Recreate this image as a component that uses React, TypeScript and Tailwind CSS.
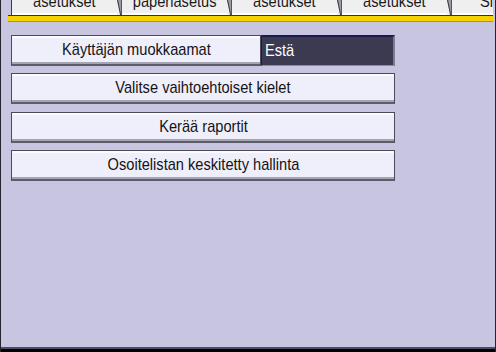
import React from "react"

const font = { fontFamily: '"Liberation Sans", Arial, sans-serif' }

function Wedge() {
  return (
    <svg width="5" height="15" viewBox="0 0 5 15" className="shrink-0 block">
      <polygon points="0,0 4,0 4,15 3.5,15" fill="#9a9aa0" />
      <line x1="0.5" y1="0" x2="3.6" y2="15" stroke="#3a3a44" strokeWidth="1" />
      <line x1="4.5" y1="0" x2="4.5" y2="15" stroke="#55555f" strokeWidth="1" />
    </svg>
  )
}

function Tab({ label, width = "w-[105px]", align = "justify-center" }: { label: string; width?: string; align?: string }) {
  return (
    <div className={`${width} shrink-0 h-[15px] flex ${align} overflow-hidden border-b-2 border-white`}>
      <span className="inline-block scale-x-[0.86] origin-center leading-none text-[17px] text-[#1a1a1a] whitespace-nowrap -mt-[7px]">
        {label}
      </span>
    </div>
  )
}

function Button({ label }: { label: string }) {
  return (
    <div className="h-[31px] flex items-center justify-center bg-[#efeefb] border border-[#4a4a5a] border-b-2 border-b-[#5c5c6c] shadow-[inset_0_2px_0_#fafaff,inset_0_-2px_0_#a4a4b2] text-[17px] leading-none text-[#141414]">
      <span className="inline-block scale-x-[0.86] whitespace-nowrap pb-[1px]">{label}</span>
    </div>
  )
}

export default function App() {
  const tabs = ["asetukset", "paperiasetus", "asetukset", "asetukset"]

  return (
    <div style={font} className="w-[496px] h-[352px] bg-[#c7c5e0] flex flex-col border-l border-r border-[#24242e] overflow-hidden">
      {/* Tab strip */}
      <div className="pl-[7px] pr-[2px]">
        <div className="ml-[3px] flex h-[15px] border-l border-[#3a3a44] bg-[#efeff0] overflow-hidden">
          {tabs.map((t, i) => (
            <React.Fragment key={i}>
              <Tab label={t} />
              <Wedge />
            </React.Fragment>
          ))}
          <Tab label="Si" width="flex-1" align="justify-start pl-[27px]" />
        </div>
        <div className="h-[1px] bg-[#33333c]" />
        <div className="h-[6px] bg-[#f6d300] border-b border-[#b59800]" />
      </div>

      {/* Menu */}
      <div className="mt-[13px] ml-[10px] w-[384px] flex flex-col gap-[7.3px]">
        <div className="flex h-[31px]">
          <div className="w-[250px]">
            <Button label="Käyttäjän muokkaamat" />
          </div>
          <div className="flex-1 h-[31px] flex items-center bg-[#3b3a50] border-t-2 border-l border-[#1b1b4e] border-r-2 border-r-[#7c7c92] border-b border-b-[#8a8a9e] text-white text-[17px] leading-none pl-[3px]">
            <span className="inline-block scale-x-[0.86] origin-left pb-[1px]">Estä</span>
          </div>
        </div>
        <Button label="Valitse vaihtoehtoiset kielet" />
        <Button label="Kerää raportit" />
        <Button label="Osoitelistan keskitetty hallinta" />
      </div>

      <div className="flex-1" />
      <div className="h-[2px] bg-[#4c4a64]" />
      <div className="h-[3px] bg-black" />
    </div>
  )
}
